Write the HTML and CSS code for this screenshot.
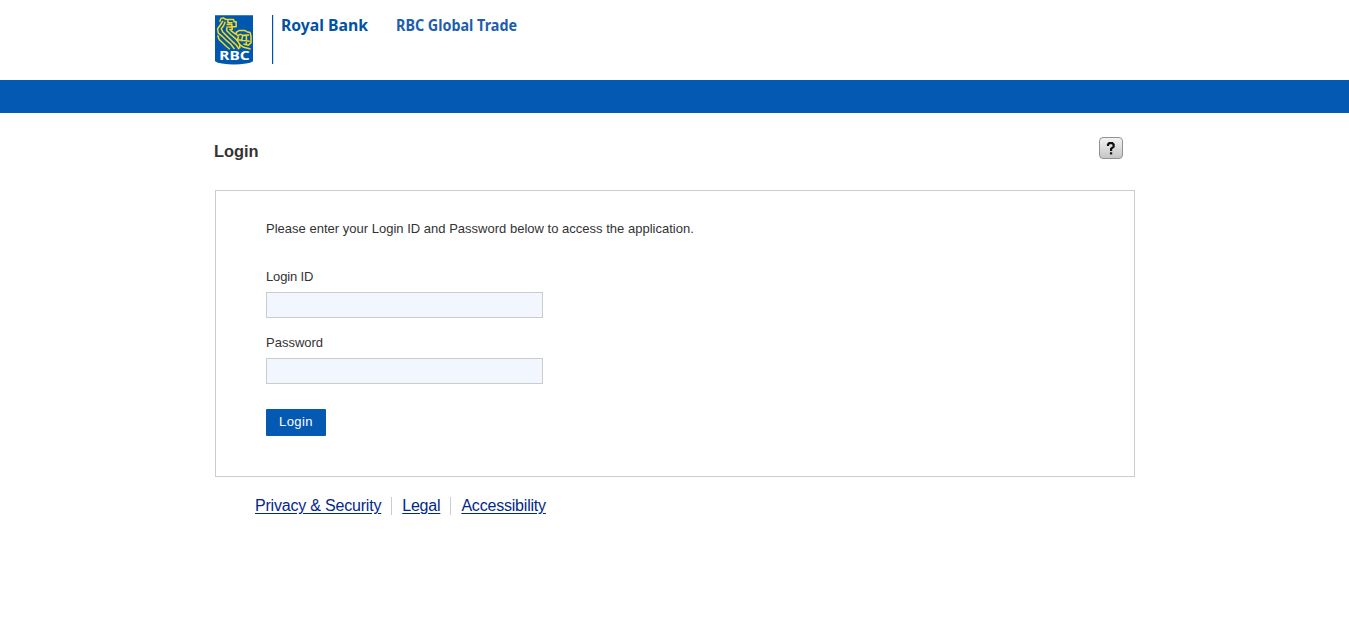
FILE: index.html
```html
<!DOCTYPE html>
<html lang="en">
<head>
<meta charset="utf-8">
<title>RBC Global Trade - Login</title>
<link rel="stylesheet" href="styles.css">
</head>
<body>
<header class="header">
  <svg class="logo" viewBox="30 30 115 150" role="img" aria-label="RBC">
    <path class="shield" d="M30 30H145V169Q138 174 124 176Q88 183 51 176Q37 174 30 169Z"/>
    <g class="lion">
      <path d="M44 50L48 40L55 38L63 43H86L88 50H94V65H82V73H73M69 44V53H83M65 58H81V66H70"/>
      <path d="M54 47L47 58L38 71L40 84L53 95L64 106L77 117L89 132"/>
      <path d="M61 50L56 62L49 71L53 80L67 94L82 109L95 121L103 133"/>
      <path d="M67 64L65 76L78 89L91 100L101 112L105 119V130"/>
      <path d="M38 91L43 104L54 114L64 124L75 133M77 76L90 86H97"/>
      <path d="M95 90L94 82L104 76H120L126 80L136 82L139 94V113L131 121L116 117M96 92L107 88L115 91L133 90M102 94L96 107M114 91L110 109M125 92V118M99 104L135 109M105 119L117 127L138 132"/>
    </g>
    <text class="logo-text" x="43" y="165" textLength="92" lengthAdjust="spacingAndGlyphs">RBC</text>
  </svg>
  <svg class="wordmark" viewBox="0 -8 260 58">
    <path class="rule" d="M0 0H1.2V49H0Z"/>
    <text class="bank" x="9" y="16" textLength="87" lengthAdjust="spacingAndGlyphs">Royal Bank</text>
    <text class="product" x="124" y="16" textLength="121" lengthAdjust="spacingAndGlyphs">RBC Global Trade</text>
  </svg>
</header>
<div class="band"></div>
<main class="content">
  <div class="title-row">
    <h1 class="title">Login</h1>
    <button class="help" type="button" aria-label="Help">
      <svg class="help-icon" viewBox="0 0 10 13"><path d="M2 4V2.5L3.2 1.2H6.3L7.6 2.4V4.8L5.1 6.7V9"/><path class="help-dot" d="M3.9 10.3H6.2V12.4H3.9Z"/></svg>
    </button>
  </div>
  <form class="panel">
    <p class="intro">Please enter your Login ID and Password below to access the application.</p>
    <label class="label label-user" for="user">Login ID</label>
    <input class="field" id="user" type="text">
    <label class="label" for="pass">Password</label>
    <input class="field" id="pass" type="password">
    <button class="submit" type="button">Login</button>
  </form>
  <nav class="links">
    <a class="link" href="#">Privacy &amp; Security</a>
    <a class="link" href="#">Legal</a>
    <a class="link" href="#">Accessibility</a>
  </nav>
</main>
</body>
</html>
```
FILE: styles.css
```css
* { box-sizing: border-box; }
body {
  margin: 0;
  background: #fff;
  color: #333;
  font-family: "Liberation Sans", Arial, sans-serif;
  font-size: 13px;
}
.header {
  display: flex;
  align-items: flex-end;
  gap: 19px;
  height: 80px;
  padding: 0 0 15px 215px;
}
.logo { width: 38px; height: 50px; }
.shield { fill: #0057b0; }
.lion {
  fill: none;
  stroke: #f5da18;
  stroke-width: 4.6;
  stroke-linejoin: round;
}
.logo-text {
  fill: #fff;
  font: bold 37px "Noto Sans", sans-serif;
}
.wordmark { width: 260px; height: 58px; }
.rule, .bank { fill: #0052a5; }
.bank, .product { font: bold 16px "Noto Sans", sans-serif; }
.product { fill: #1d5dae; }
.band { height: 33px; background: #0459b3; }
.content { width: 920px; margin-left: 215px; }
.title-row {
  display: flex;
  justify-content: space-between;
  align-items: flex-start;
  height: 77px;
  padding: 24px 12px 0 0;
}
.title {
  margin: 5px 0 0 -1px;
  font-size: 16.4px;
  line-height: 19px;
}
.help {
  display: flex;
  align-items: center;
  justify-content: center;
  width: 24px;
  height: 22px;
  padding: 0;
  border: 1px solid #929292;
  border-radius: 4px;
  background: linear-gradient(#f2f2f2, #c6c6c6);
}
.help-icon {
  width: 10px;
  height: 13px;
  fill: none;
  stroke: #111;
  stroke-width: 2.2;
}
.help-dot { fill: #111; stroke: none; }
.panel {
  display: flex;
  flex-direction: column;
  align-items: flex-start;
  height: 287px;
  padding: 29px 50px 0;
  border: 1px solid #ccc;
}
.intro {
  margin: 0 0 30px;
  line-height: 18px;
  letter-spacing: 0.01px;
}
.label { line-height: 18px; }
.label-user { letter-spacing: -0.15px; }
.field {
  width: 277px;
  height: 26px;
  margin: 6px 0 16px;
  border: 1px solid #ccc;
  background: #f2f6ff;
}
.submit {
  width: 60px;
  height: 27px;
  margin-top: 9px;
  padding: 0 0 2px;
  border: 0;
  border-radius: 1px;
  background: #0459b3;
  color: #fff;
  font: 13px "Liberation Sans", Arial, sans-serif;
  letter-spacing: 0.4px;
}
.links { display: flex; padding: 20px 0 0 40px; }
.link {
  color: #002888;
  font-size: 16px;
  line-height: 18px;
  letter-spacing: -0.2px;
  text-underline-offset: 2px;
}
.link + .link {
  margin-left: 10px;
  padding-left: 10px;
  border-left: 1px solid #ccc;
}
```
